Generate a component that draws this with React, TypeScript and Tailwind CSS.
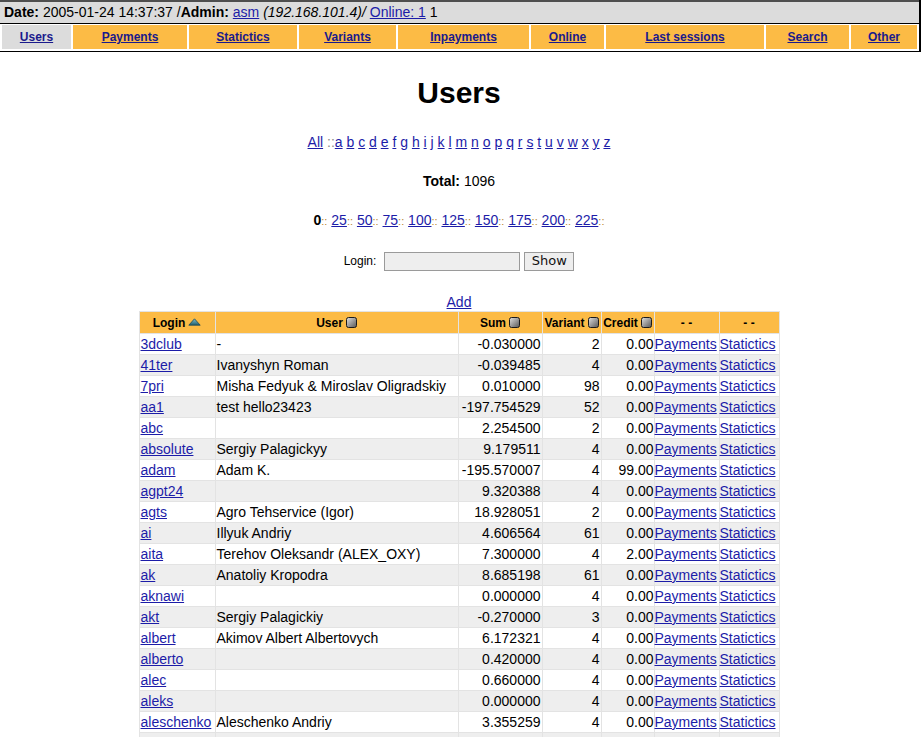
import React from "react";

const LINK = "text-[#1c1ca8] underline";

const navItems: { label: string; w: string; active?: boolean }[] = [
  { label: "Users", w: "w-[69px]", active: true },
  { label: "Payments", w: "w-[114px]" },
  { label: "Statictics", w: "w-[108px]" },
  { label: "Variants", w: "w-[97px]" },
  { label: "Inpayments", w: "w-[131px]" },
  { label: "Online", w: "w-[73px]" },
  { label: "Last sessions", w: "w-[158px]" },
  { label: "Search", w: "w-[83px]" },
  { label: "Other", w: "w-[66px]" },
];

const letters = "abcdefghijklmnopqrstuvwxyz".split("");
const pages = ["25", "50", "75", "100", "125", "150", "175", "200", "225"];

const rows: [string, string, string, string, string][] = [
  ["3dclub", "-", "-0.030000", "2", "0.00"],
  ["41ter", "Ivanyshyn Roman", "-0.039485", "4", "0.00"],
  ["7pri", "Misha Fedyuk & Miroslav Oligradskiy", "0.010000", "98", "0.00"],
  ["aa1", "test hello23423", "-197.754529", "52", "0.00"],
  ["abc", "", "2.254500", "2", "0.00"],
  ["absolute", "Sergiy Palagickyy", "9.179511", "4", "0.00"],
  ["adam", "Adam K.", "-195.570007", "4", "99.00"],
  ["agpt24", "", "9.320388", "4", "0.00"],
  ["agts", "Agro Tehservice (Igor)", "18.928051", "2", "0.00"],
  ["ai", "Illyuk Andriy", "4.606564", "61", "0.00"],
  ["aita", "Terehov Oleksandr (ALEX_OXY)", "7.300000", "4", "2.00"],
  ["ak", "Anatoliy Kropodra", "8.685198", "61", "0.00"],
  ["aknawi", "", "0.000000", "4", "0.00"],
  ["akt", "Sergiy Palagickiy", "-0.270000", "3", "0.00"],
  ["albert", "Akimov Albert Albertovych", "6.172321", "4", "0.00"],
  ["alberto", "", "0.420000", "4", "0.00"],
  ["alec", "", "0.660000", "4", "0.00"],
  ["aleks", "", "0.000000", "4", "0.00"],
  ["aleschenko", "Aleschenko Andriy", "3.355259", "4", "0.00"],
  ["alex", "Oleksiy Bondar", "1.250000", "4", "0.00"],
  ["alexk", "", "0.000000", "2", "0.00"],
];

function SortUp() {
  return (
    <svg width="13" height="8" viewBox="0 0 13 8" className="inline-block ml-[3px] align-[1px]">
      <defs>
        <linearGradient id="tri" x1="0" y1="0" x2="0" y2="1">
          <stop offset="0" stopColor="#7fc0cf" />
          <stop offset="1" stopColor="#1f5d6c" />
        </linearGradient>
      </defs>
      <polygon points="6.5,0.8 12.2,7.2 0.8,7.2" fill="url(#tri)" stroke="#1b4955" strokeWidth="0.8" />
    </svg>
  );
}

function SortNone() {
  return (
    <svg width="11" height="11" viewBox="0 0 11 11" className="inline-block ml-[3px] align-[-1px]">
      <defs>
        <linearGradient id="sq" x1="0" y1="0" x2="1" y2="1">
          <stop offset="0" stopColor="#e2e2e2" />
          <stop offset="1" stopColor="#555555" />
        </linearGradient>
      </defs>
      <rect x="0.5" y="0.5" width="10" height="10" rx="2" fill="url(#sq)" stroke="#1a1a1a" strokeWidth="1" />
    </svg>
  );
}

export default function App() {
  return (
    <div className="w-[921px] bg-white text-black font-['Liberation_Sans',Arial,sans-serif]">
      {/* top bar + nav */}
      <div className="border-r-2 border-black">
        <div className="h-[24px] border-t-2 border-[#4e4e4e] border-b border-b-black bg-[#dcdcdc] flex items-center pl-[4px] text-[14px] whitespace-pre">
          <b>Date:</b>
          <span> 2005-01-24 14:37:37 /</span>
          <b>Admin:</b>
          <span> </span>
          <a className={LINK}>asm</a>
          <span> </span>
          <i>(192.168.101.4)/</i>
          <span> </span>
          <a className={LINK}>Online: 1</a>
          <span> 1</span>
        </div>
        <div className="flex gap-[2px] pl-[2px] pt-[1px] pb-[2px] border-b border-black">
          {navItems.map((n) => (
            <div
              key={n.label}
              className={`${n.w} h-[24px] flex items-center justify-center text-[12px] font-bold ${
                n.active ? "bg-[#dcdcdc]" : "bg-[#fcbb45]"
              }`}
            >
              <a className="text-[#1a1a8c] underline">{n.label}</a>
            </div>
          ))}
        </div>
      </div>

      {/* content */}
      <div className="w-[918px] text-center">
        <h1 className="mt-[24px] h-[34px] leading-[34px] text-[30px] font-bold">Users</h1>

        <div className="mt-[24px] h-[16px] leading-[16px] text-[14px] whitespace-pre">
          <a className={LINK}>All</a>
          <span className="text-[#8a8a8a]"> ::</span>
          {letters.map((l, i) => (
            <React.Fragment key={l}>
              {i > 0 && " "}
              <a className={LINK}>{l}</a>
            </React.Fragment>
          ))}
        </div>

        <div className="mt-[23px] h-[16px] leading-[16px] text-[14px]">
          <b>Total:</b> 1096
        </div>

        <div className="mt-[23px] h-[16px] leading-[16px] text-[14px] whitespace-pre">
          <b>0</b>
          <span className="text-[11px] text-[#b8862e]">::</span>
          {pages.map((p) => (
            <React.Fragment key={p}>
              {" "}
              <a className={LINK}>{p}</a>
              <span className="text-[11px] text-[#b8862e]">::</span>
            </React.Fragment>
          ))}
        </div>

        <div className="mt-[23px] h-[20px] flex items-center justify-center">
          <span className="text-[12px] mr-[8px]">Login:</span>
          <div className="w-[136px] h-[19px] bg-[#eeeeee] border border-[#9a9a9a]" />
          <div className="ml-[4px] w-[50px] h-[19px] bg-[#eeeeee] border border-[#9a9a9a] flex items-center justify-center text-[13px] font-['DejaVu_Sans',sans-serif] text-[#111]">
            Show
          </div>
        </div>

        <div className="mt-[23px] h-[16px] leading-[16px] text-[14px]">
          <a className={LINK}>Add</a>
        </div>

        <table className="mt-[1px] mx-auto table-fixed border-separate border-spacing-[1px] bg-[#e3e3e3] text-[14px] w-[641px]">
          <colgroup>
            <col className="w-[75px]" />
            <col className="w-[242px]" />
            <col className="w-[83px]" />
            <col className="w-[58px]" />
            <col className="w-[52px]" />
            <col className="w-[64px]" />
            <col className="w-[59px]" />
          </colgroup>
          <thead>
            <tr className="bg-[#fcbb45] text-[12px] font-bold h-[21px]">
              <th className="p-0 font-bold whitespace-nowrap">
                Login
                <SortUp />
              </th>
              <th className="p-0 font-bold whitespace-nowrap">
                User
                <SortNone />
              </th>
              <th className="p-0 font-bold whitespace-nowrap">
                Sum
                <SortNone />
              </th>
              <th className="p-0 font-bold whitespace-nowrap">
                Variant
                <SortNone />
              </th>
              <th className="p-0 font-bold whitespace-nowrap">
                Credit
                <SortNone />
              </th>
              <th className="p-0 font-bold">- -</th>
              <th className="p-0 font-bold">- -</th>
            </tr>
          </thead>
          <tbody>
            {rows.map((r, i) => (
              <tr key={r[0]} className={`h-[20px] ${i % 2 === 0 ? "bg-white" : "bg-[#eeeeee]"}`}>
                <td className="p-0 pl-[1px] text-left whitespace-nowrap leading-[20px]">
                  <a className={LINK}>{r[0]}</a>
                </td>
                <td className="p-0 pl-[1px] text-left whitespace-nowrap leading-[20px]">{r[1]}</td>
                <td className="p-0 pr-[1px] text-right whitespace-nowrap leading-[20px]">{r[2]}</td>
                <td className="p-0 pr-[1px] text-right whitespace-nowrap leading-[20px]">{r[3]}</td>
                <td className="p-0 text-right whitespace-nowrap leading-[20px]">{r[4]}</td>
                <td className="p-0 text-left whitespace-nowrap leading-[20px]">
                  <a className={LINK}>Payments</a>
                </td>
                <td className="p-0 text-left whitespace-nowrap leading-[20px]">
                  <a className={LINK}>Statictics</a>
                </td>
              </tr>
            ))}
          </tbody>
        </table>
      </div>
    </div>
  );
}
